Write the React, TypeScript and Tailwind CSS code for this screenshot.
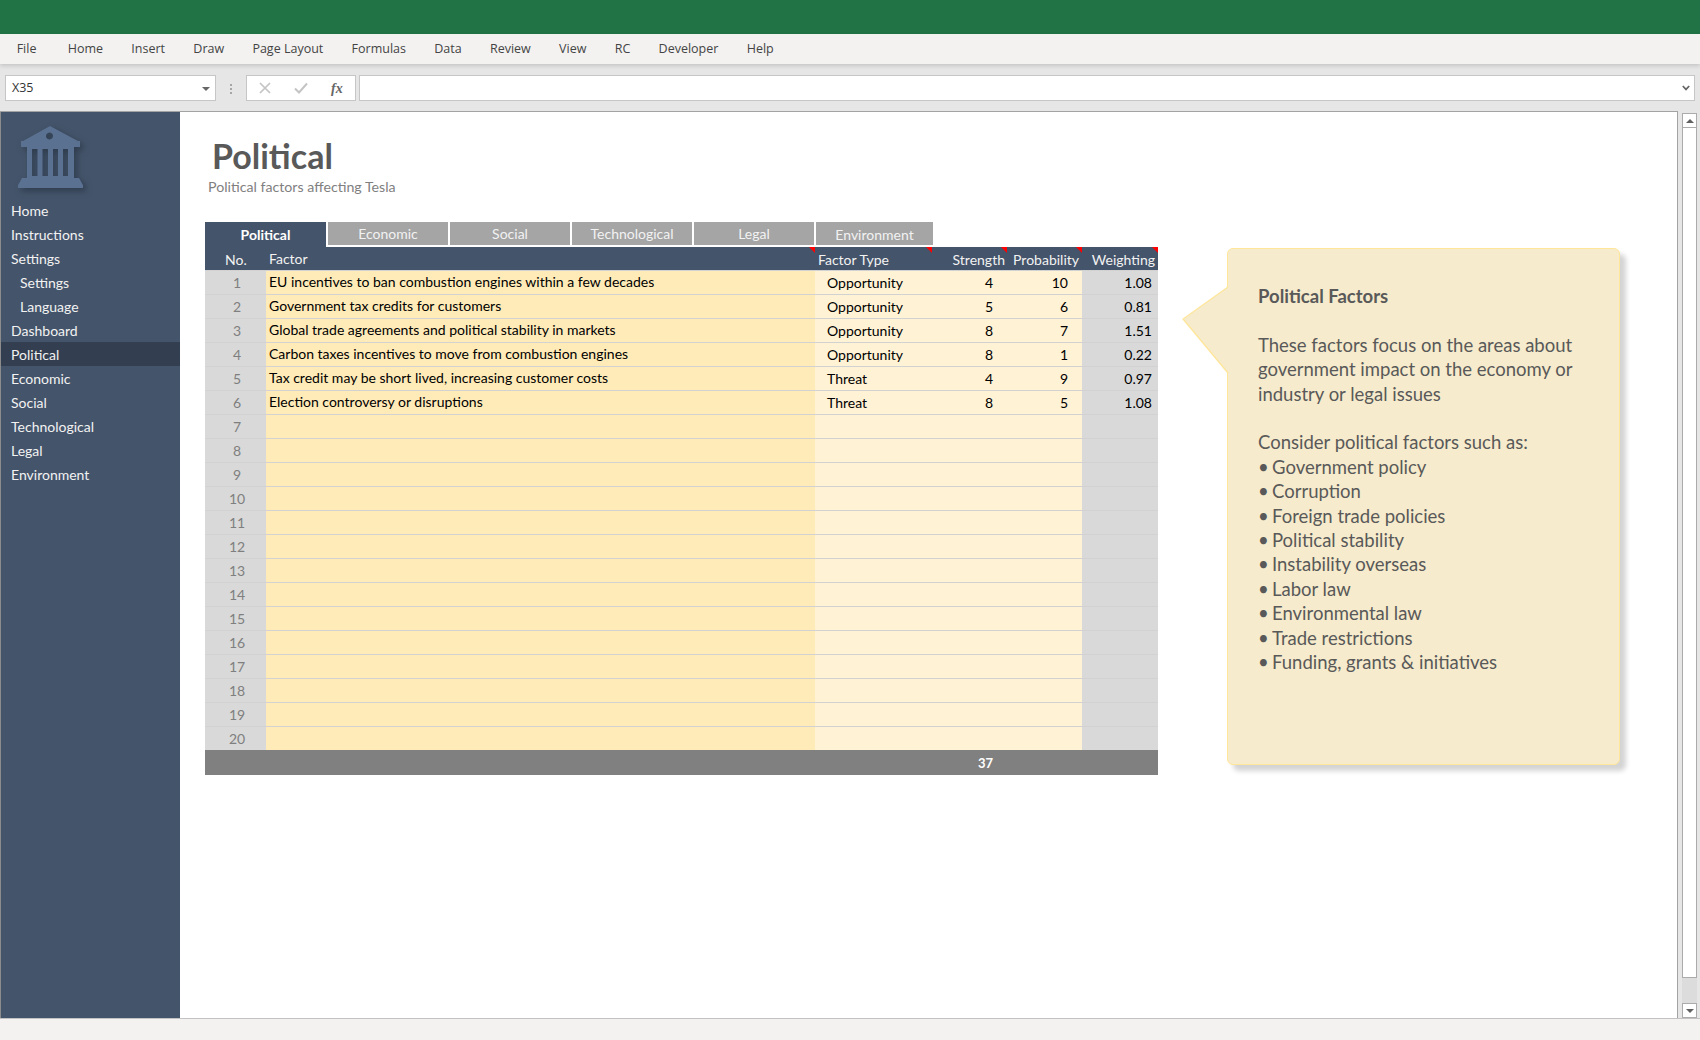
const MENU = ["File", "Home", "Insert", "Draw", "Page Layout", "Formulas", "Data", "Review", "View", "RC", "Developer", "Help"];

const NAV = [
  { label: "Home" },
  { label: "Instructions" },
  { label: "Settings" },
  { label: "Settings", sub: true },
  { label: "Language", sub: true },
  { label: "Dashboard" },
  { label: "Political", active: true },
  { label: "Economic" },
  { label: "Social" },
  { label: "Technological" },
  { label: "Legal" },
  { label: "Environment" },
];

const TABS = ["Political", "Economic", "Social", "Technological", "Legal", "Environment"];

const ROWS = [
  { factor: "EU incentives to ban combustion engines within a few decades", type: "Opportunity", strength: 4, probability: 10, weighting: "1.08" },
  { factor: "Government tax credits for customers", type: "Opportunity", strength: 5, probability: 6, weighting: "0.81" },
  { factor: "Global trade agreements and political stability in markets", type: "Opportunity", strength: 8, probability: 7, weighting: "1.51" },
  { factor: "Carbon taxes incentives to move from combustion engines", type: "Opportunity", strength: 8, probability: 1, weighting: "0.22" },
  { factor: "Tax credit may be short lived, increasing customer costs", type: "Threat", strength: 4, probability: 9, weighting: "0.97" },
  { factor: "Election controversy or disruptions", type: "Threat", strength: 8, probability: 5, weighting: "1.08" },
];

const BULLETS = [
  "Government policy",
  "Corruption",
  "Foreign trade policies",
  "Political stability",
  "Instability overseas",
  "Labor law",
  "Environmental law",
  "Trade restrictions",
  "Funding, grants & initiatives",
];

const CALIBRI = "font-['Lato','Liberation_Sans',sans-serif]";

function RedCorner() {
  return <span className="absolute right-0 top-0 h-0 w-0 border-l-[6px] border-t-[6px] border-l-transparent border-t-[#ff0000]" />;
}

function BankIcon() {
  return (
    <svg width="70" height="70" viewBox="16 122 70 70" className="ml-[15px] mt-[10px] mb-[6px] block drop-shadow-[3px_3px_3px_rgba(30,40,55,0.55)]">
      <path
        fill="#5a7191"
        fillRule="evenodd"
        d="M50 126 L78 141 L80 141 L80 147 L74 147 L74 178 L79 178 L83 185 L83 188 L18 188 L18 185 L22 178 L27 178 L27 147 L21 147 L21 141 L23 141 Z M49.5 132.5 a3.5 3.5 0 1 0 0.01 0 Z M32 149 L32 176 L37.5 176 L37.5 149 Z M42.5 149 L42.5 176 L48 176 L48 149 Z M53 149 L53 176 L58 176 L58 149 Z M63 149 L63 176 L68 176 L68 149 Z"
      />
    </svg>
  );
}

function Sidebar() {
  return (
    <aside className="h-full w-[180px] shrink-0 border-l border-[#8c8c8c] bg-[#44546a]">
      <BankIcon />
      <nav>
        {NAV.map((item, i) => (
          <div
            key={i}
            className={`flex h-6 items-center pt-[1px] text-[14px] text-[#f2f2f2] ${item.sub ? "pl-[19px]" : "pl-[10px]"} ${item.active ? "bg-[#333f50]" : ""}`}
          >
            {item.label}
          </div>
        ))}
      </nav>
    </aside>
  );
}

function Tabs() {
  return (
    <div className="flex h-[25px] gap-[2px]">
      {TABS.map((tab, i) => (
        <div
          key={tab}
          className={`flex items-center justify-center text-[14px] ${
            i === 0
              ? "h-[25px] w-[121px] bg-[#44546a] pb-[1px] font-bold text-white"
              : i === 5
                ? "h-[23px] w-[117px] bg-[#a5a5a5] pt-[2px] text-[#f2f2f2]"
                : "h-[23px] w-[120px] bg-[#a5a5a5] text-[#f2f2f2]"
          }`}
        >
          {tab}
        </div>
      ))}
    </div>
  );
}

function HeaderRow() {
  return (
    <div className="flex h-[23px] items-center bg-[#44546a] text-[14px] text-[#f2f2f2]">
      <div className="w-[61px] pl-[20px] pt-[1px]">No.</div>
      <div className="relative flex h-full w-[549px] items-center pb-[1px] pl-[3px]">
        Factor
        <RedCorner />
      </div>
      <div className="relative flex h-full w-[117px] items-center pl-[3px] pt-[1px]">
        Factor Type
        <RedCorner />
      </div>
      <div className="relative flex h-full w-[75px] items-center justify-end pr-[2px] pt-[1px]">
        Strength
        <RedCorner />
      </div>
      <div className="relative flex h-full w-[75px] items-center justify-end pr-[3px] pt-[1px]">
        Probability
        <RedCorner />
      </div>
      <div className="relative flex h-full w-[76px] items-center justify-end pr-[3px] pt-[1px]">
        Weighting
        <RedCorner />
      </div>
    </div>
  );
}

function DataTable() {
  return (
    <div className="w-[953px]">
      <Tabs />
      <HeaderRow />
      {Array.from({ length: 20 }).map((_, i) => {
        const row = ROWS[i];
        return (
          <div key={i} className="flex h-6 border-t border-[#d2d2d2] text-[14px] text-black">
            <div className="flex w-[61px] items-center justify-center bg-[#d9d9d9] pl-[3px] text-[#7f7f7f]">{i + 1}</div>
            <div className="flex w-[549px] items-center bg-[#ffebb8] pb-[2px] pl-[3px]">{row?.factor}</div>
            <div className="flex w-[117px] items-center bg-[#fff2d5] pl-[12px]">{row?.type}</div>
            <div className="flex w-[75px] items-center justify-end bg-[#fff2d5] pr-[14px]">{row?.strength}</div>
            <div className="flex w-[75px] items-center justify-end bg-[#fff2d5] pr-[14px]">{row?.probability}</div>
            <div className="flex w-[76px] items-center justify-end bg-[#d9d9d9] pr-[6px]">{row?.weighting}</div>
          </div>
        );
      })}
      <div className="flex h-[25px] items-center justify-end bg-[#808080] pr-[165px] pt-[2px] text-[13px] font-bold text-white">37</div>
    </div>
  );
}

function Callout() {
  return (
    <div className="relative ml-[69px] mt-[136px] h-[517px] w-[393px] rounded-[6px] border border-[#ffe699] bg-[#f6ebcc] pl-[30px] pt-[35px] text-[18.5px] text-[#595959] shadow-[6px_6px_5px_#d4d4d4]">
      <svg width="47" height="87" viewBox="0 0 47 87" className="absolute left-[-46px] top-[38px]">
        <path d="M46 0 L1 32 L46 86" fill="#f6ebcc" stroke="#ffe699" strokeWidth="1.2" />
      </svg>
      <div className="h-[24.4px] font-bold leading-[24.4px]">Political Factors</div>
      <div className="h-[24.4px]" />
      <div className="leading-[24.4px]">
        These factors focus on the areas about
        <br />
        government impact on the economy or
        <br />
        industry or legal issues
      </div>
      <div className="h-[24.4px]" />
      <div className="h-[24.4px] leading-[24.4px]">Consider political factors such as:</div>
      {BULLETS.map((item) => (
        <div key={item} className="flex h-[24.4px] leading-[24.4px]">
          <span className="w-[14px]">•</span>
          {item}
        </div>
      ))}
    </div>
  );
}

function ScrollColumn() {
  return (
    <div className="flex h-full w-[22px] shrink-0 flex-col bg-[#e6e6e6] pl-[4px] pr-[3px] pt-[2px]">
      <div className="flex h-[15px] items-center justify-center border border-[#ababab] bg-white">
        <span className="h-0 w-0 border-x-[4px] border-b-[4px] border-x-transparent border-b-[#606060]" />
      </div>
      <div className="h-[850px] border-x border-b border-[#ababab] bg-white" />
      <div className="flex-1 bg-[#dcdcdc]" />
      <div className="flex h-[15px] items-center justify-center border border-[#ababab] bg-white">
        <span className="h-0 w-0 border-x-[4px] border-t-[4px] border-x-transparent border-t-[#606060]" />
      </div>
    </div>
  );
}

export default function App() {
  return (
    <div className={`flex h-[1040px] w-[1700px] flex-col overflow-hidden bg-[#e6e6e6] ${CALIBRI}`}>
      <div className="h-[34px] shrink-0 bg-[#217346]" />
      <div className="relative z-10 flex h-[30px] shrink-0 items-center bg-[#f3f2f1] pl-[2.5px] pt-[1px] font-['Open_Sans',sans-serif] text-[12.5px] text-[#444444] shadow-[0_2px_4px_rgba(0,0,0,0.14)]">
        {MENU.map((item, i) => (
          <span key={item} className={`px-[14.15px] ${i === 0 ? "mr-[3px]" : ""}`}>
            {item}
          </span>
        ))}
      </div>

      <div className="flex h-[47px] shrink-0 items-start pl-[5px] pr-[5px] pt-[11px] font-['Open_Sans',sans-serif]">
        <div className="flex h-[26px] w-[211px] items-center justify-between border border-[#c6c6c6] bg-white pl-[6px] pr-[5px] pt-[1px] text-[12.5px] text-[#333333]">
          X35
          <span className="h-0 w-0 border-x-[4px] border-t-[4px] border-x-transparent border-t-[#666666]" />
        </div>
        <div className="mx-[14px] mt-[9px] flex w-[2px] flex-col gap-[2px]">
          <span className="h-[2px] w-[2px] bg-[#a6a6a6]" />
          <span className="h-[2px] w-[2px] bg-[#a6a6a6]" />
          <span className="h-[2px] w-[2px] bg-[#a6a6a6]" />
        </div>
        <div className="flex h-[26px] w-[110px] items-center border border-[#c6c6c6] bg-white">
          <svg width="12" height="12" viewBox="0 0 12 12" className="ml-[12px]">
            <path d="M1 1 L11 11 M11 1 L1 11" stroke="#c4c4c4" strokeWidth="1.7" />
          </svg>
          <svg width="14" height="12" viewBox="0 0 14 12" className="ml-[23px]">
            <path d="M1 6.5 L5 10.5 L13 1.5" fill="none" stroke="#c4c4c4" strokeWidth="2" />
          </svg>
          <span className="ml-[23px] font-['Liberation_Serif',serif] text-[14px] font-bold italic text-[#666666]">fx</span>
        </div>
        <div className="ml-[3px] flex h-[26px] flex-1 items-center justify-end border border-[#c6c6c6] bg-white pr-[4px]">
          <svg width="8" height="6" viewBox="0 0 8 6">
            <path d="M0.8 1 L4 4.4 L7.2 1" fill="none" stroke="#666666" strokeWidth="1.7" />
          </svg>
        </div>
      </div>

      <div className="flex h-[907px] shrink-0">
        <div className="flex h-full flex-1 border-r border-t border-[#a3a3a3] bg-white">
          <Sidebar />
          <div className="flex flex-1 pl-[25px]">
            <div className="w-[953px]">
              <div className="h-[110px] pt-[24px]">
                <h1 className="h-[38px] pl-[7px] text-[34px] font-bold leading-[39px] text-[#595959]">Political</h1>
                <p className="pl-[3px] pt-[3px] text-[14.2px] leading-[20px] text-[#7f7f7f]">Political factors affecting Tesla</p>
              </div>
              <DataTable />
            </div>
            <Callout />
          </div>
        </div>
        <ScrollColumn />
      </div>

      <div className="flex-1 border-t border-[#c2c2c2] bg-[#f3f2f1]" />
    </div>
  );
}
